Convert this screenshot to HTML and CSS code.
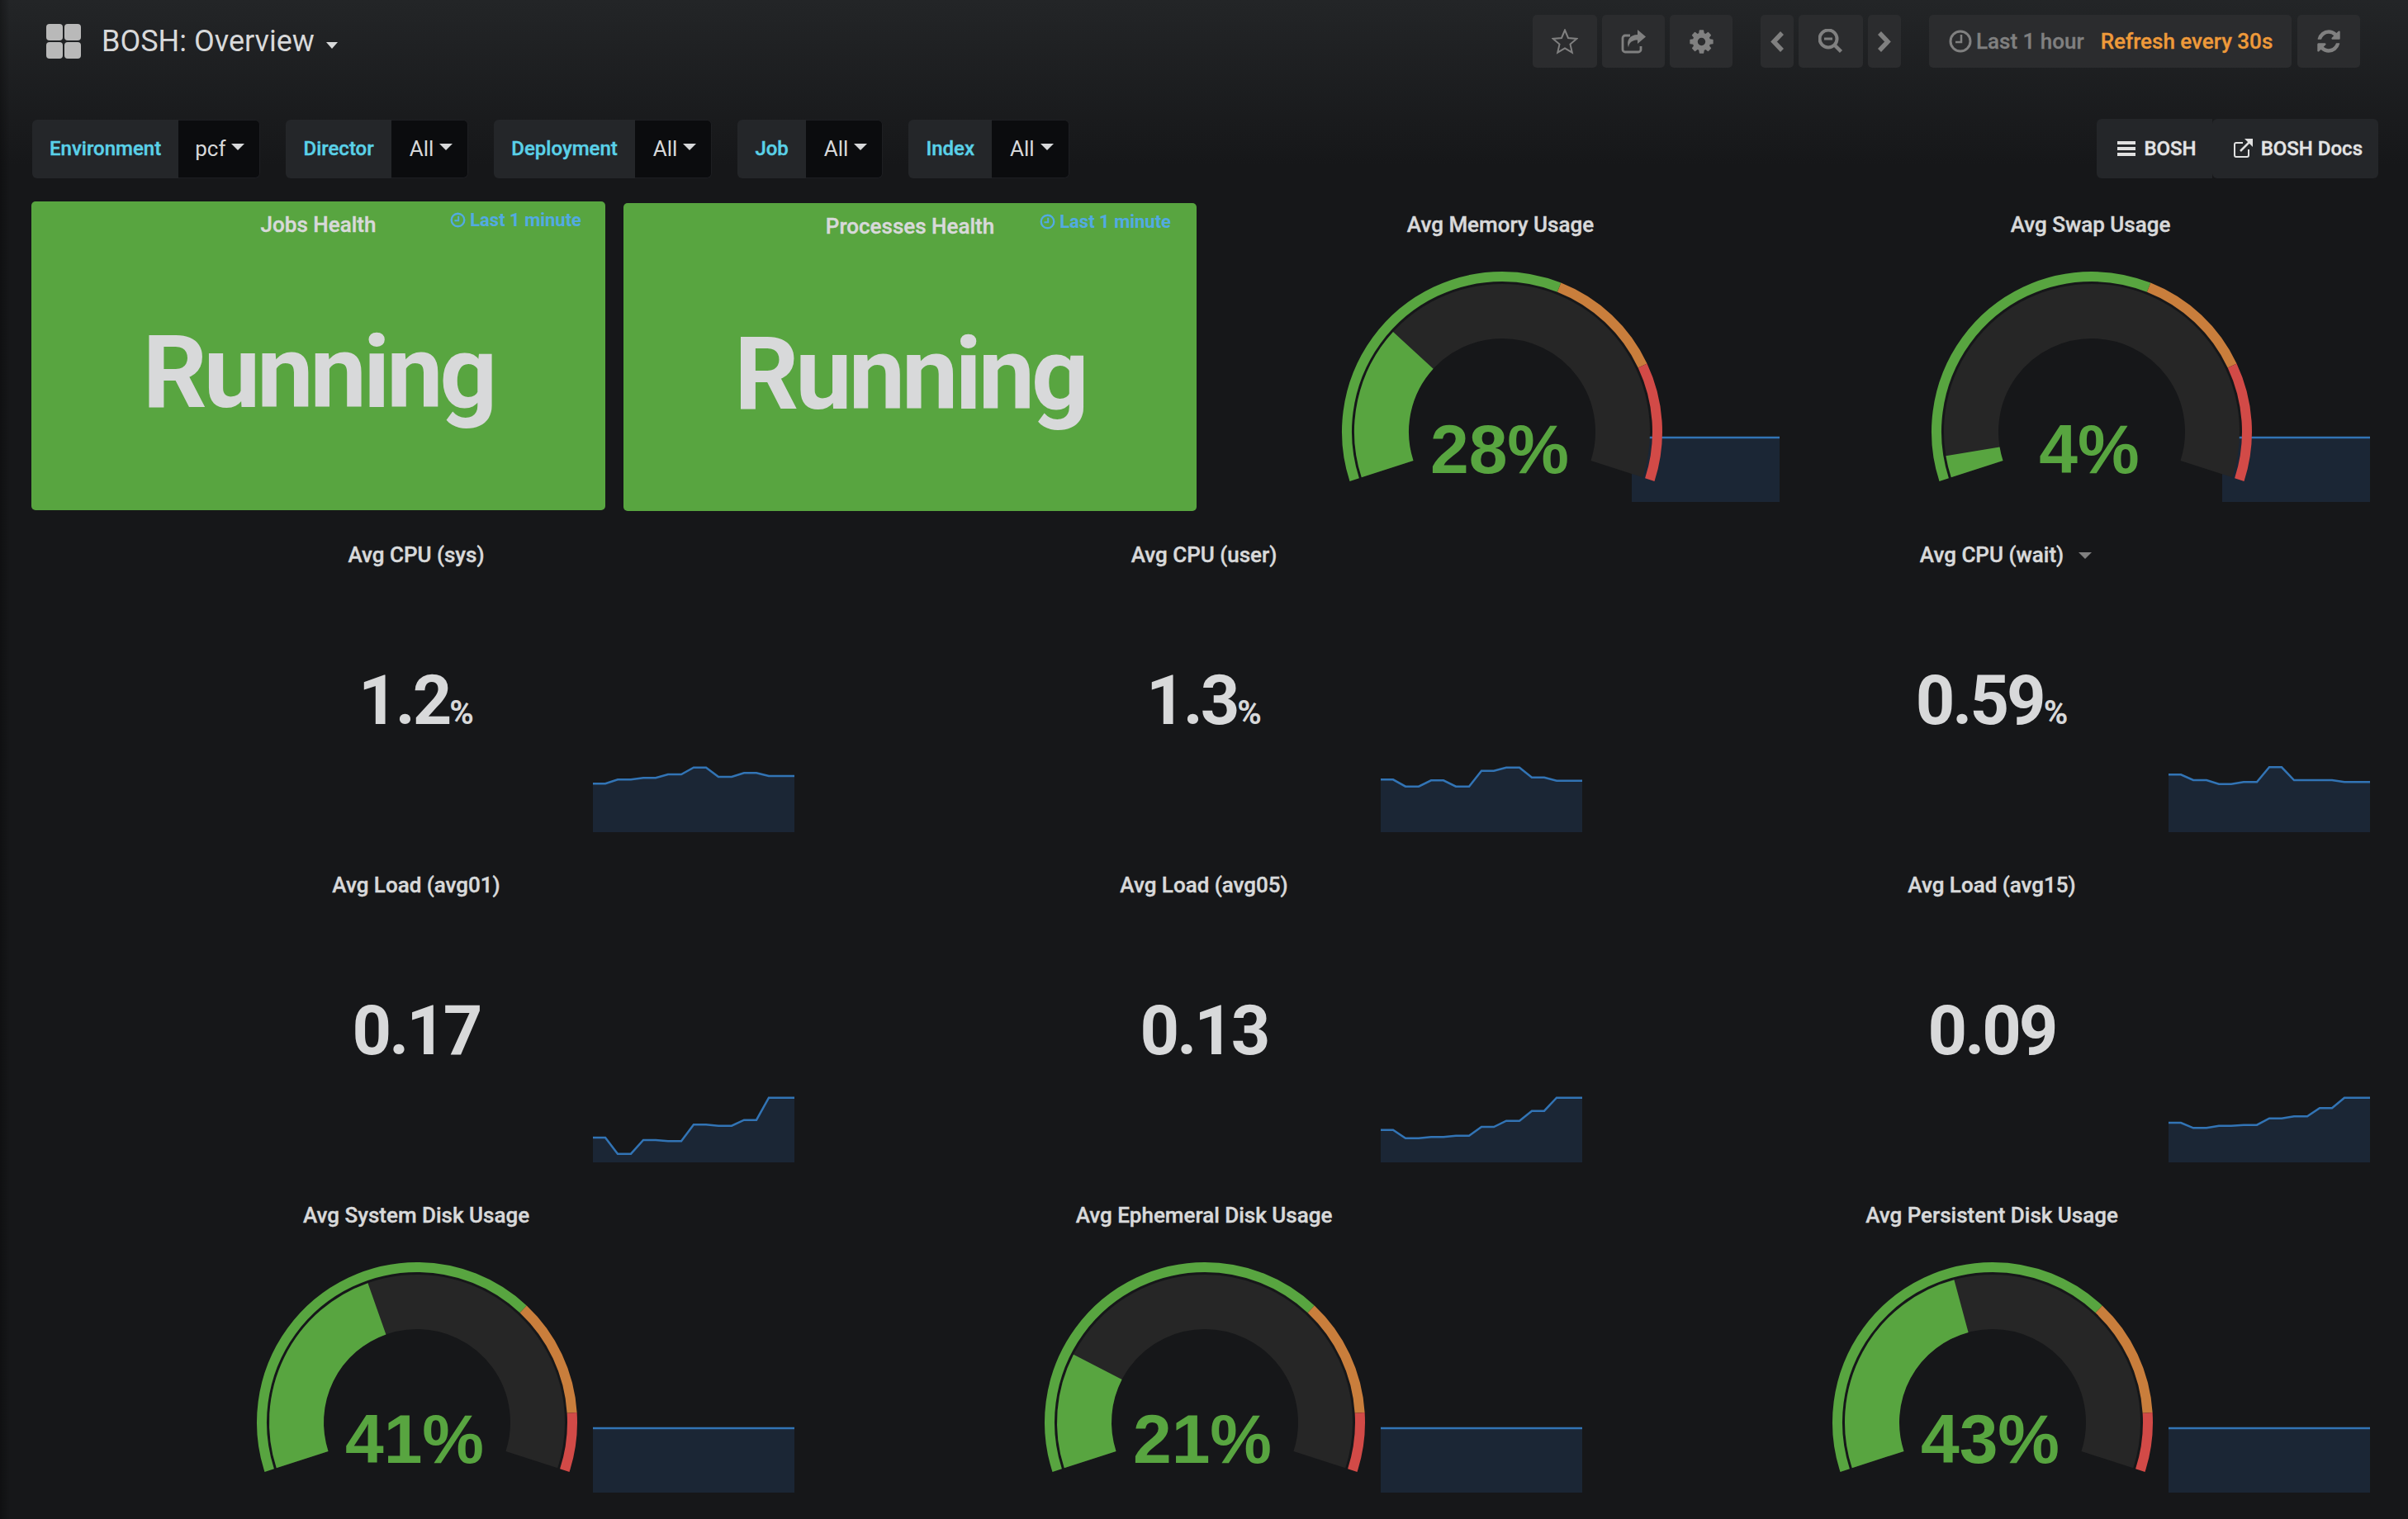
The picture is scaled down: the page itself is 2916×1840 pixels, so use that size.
FILE: index.html
```html
<!DOCTYPE html>
<html lang="en">
<head>
    <meta charset="UTF-8">
    <title>BOSH: Overview</title>
    <link rel="stylesheet" href="styles.css">
</head>
<body>
<!-- shared gauge arcs, each one is 100 units long so a dash length is a percent -->
<svg class="defs" width="0" height="0">
    <defs>
        <path id="ring" pathLength="100" d="M-178.8 58.1A188 188 0 1 1 178.8 58.1"/>
        <path id="arc" pathLength="100" d="M-138.85 45.12A146 146 0 1 1 138.85 45.12"/>
        <path id="cog" d="M1152 896q0-106-75-181t-181-75-181 75-75 181 75 181 181 75 181-75 75-181zm512-109v222q0 12-8 23t-20 13l-185 28q-19 54-39 91 35 50 107 138 10 12 10 25t-9 23q-27 37-99 108t-94 71q-12 0-26-9l-138-108q-44 23-91 38-16 136-29 186-7 28-36 28h-222q-14 0-24.5-8.5t-11.5-21.5l-28-184q-49-16-90-37l-141 107q-10 9-25 9-14 0-25-11-126-114-165-168-7-10-7-23 0-12 8-23 15-21 51-66.5t54-70.5q-27-50-41-99l-183-27q-13-2-21-12.5t-8-23.5v-222q0-12 8-23t19-13l186-28q14-46 39-92-40-57-107-138-10-12-10-24 0-10 9-23 26-36 98.5-107.5t94.5-71.5q13 0 26 10l138 107q44-23 91-38 16-136 29-186 7-28 36-28h222q14 0 24.5 8.5t11.5 21.5l28 184q49 16 90 37l142-107q9-9 24-9 13 0 25 10 129 119 165 170 7 8 7 22 0 12-8 23-15 21-51 66.5t-54 70.5q26 50 41 98l183 28q13 2 21 12.5t8 23.5z"/>
    </defs>
</svg>

<div class="navbar">
    <div class="nav-left">
        <div class="grid-icon"><i></i><i></i><i></i><i></i></div>
        <span class="dash-title">BOSH: Overview</span>
        <span class="caret title-caret"></span>
    </div>
    <div class="nav-right">
        <div class="btn-group">
            <div class="btn w78">
                <svg width="32" height="31" viewBox="0 0 32 31"><polygon class="line" stroke-width="2" points="16,1.5 20,11 30.3,11.9 22.5,18.6 24.8,28.6 16,23.3 7.2,28.6 9.5,18.6 1.7,11.9 12,11"/></svg>
            </div>
            <div class="btn w76">
                <svg width="30" height="29" viewBox="0 0 30 29"><path class="line" stroke-width="2.8" d="M24 20v4a3 3 0 0 1-3 3H5a3 3 0 0 1-3-3V10a3 3 0 0 1 3-3h6"/><path class="solid" d="M20 0l10 8.5L20 17v-4.500c-6 0-10 2.500-11 9-3-9 2-15.500 11-15.500z"/></svg>
            </div>
            <div class="btn w76">
                <svg width="33" height="33" viewBox="0 0 1792 1792"><use class="solid" href="#cog"/></svg>
            </div>
        </div>
        <div class="btn-group">
            <div class="btn w40">
                <svg width="18" height="25" viewBox="0 0 18 25"><polyline class="line" stroke-width="5.500" points="15,2 5,12.500 15,23"/></svg>
            </div>
            <div class="btn w78">
                <svg width="30" height="30" viewBox="0 0 30 30"><circle class="line" stroke-width="4" cx="12" cy="12" r="10.500"/><path class="line" stroke-width="3" d="M7 12h10"/><path class="line" stroke-width="4.500" d="M19.500 19.500l8 8"/></svg>
            </div>
            <div class="btn w40">
                <svg width="18" height="25" viewBox="0 0 18 25"><polyline class="line" stroke-width="5.500" points="3,2 13,12.500 3,23"/></svg>
            </div>
        </div>
        <div class="btn-group gap7">
            <div class="btn time-btn">
                <svg class="clock" width="28" height="28" viewBox="0 0 28 28"><circle class="line" stroke-width="3" cx="14" cy="14" r="12"/><path class="line" stroke-width="2.500" d="M15 6v9H8"/></svg>
                <span>Last 1 hour</span>
                <span class="refresh-text">Refresh every 30s</span>
            </div>
            <div class="btn w76">
                <svg width="32" height="32" viewBox="0 0 1792 1792"><path class="solid" d="M1639 1056q0 5-1 7-64 268-268 434.500t-478 166.500q-146 0-282.500-55t-243.500-157l-129 129q-19 19-45 19t-45-19-19-45v-448q0-26 19-45t45-19h448q26 0 45 19t19 45-19 45l-137 137q71 66 161 102t187 36q134 0 250-65t186-179q11-17 53-117 8-23 30-23h192q13 0 22.500 9.500t9.500 22.500zm25-800v448q0 26-19 45t-45 19h-448q-26 0-45-19t-19-45 19-45l138-138q-148-137-349-137-134 0-250 65t-186 179q-11 17-53 117-8 23-30 23h-199q-13 0-22.500-9.500t-9.500-22.500v-7q65-268 270-434.500t480-166.500q146 0 284 55.500t245 156.500l130-129q19-19 45-19t45 19 19 45z"/></svg>
            </div>
        </div>
    </div>
</div>

<div class="submenu">
    <div class="vars">
        <div class="var"><label>Environment</label><div class="var-value">pcf<span class="caret"></span></div></div>
        <div class="var"><label>Director</label><div class="var-value">All<span class="caret"></span></div></div>
        <div class="var"><label>Deployment</label><div class="var-value">All<span class="caret"></span></div></div>
        <div class="var"><label>Job</label><div class="var-value">All<span class="caret"></span></div></div>
        <div class="var"><label>Index</label><div class="var-value">All<span class="caret"></span></div></div>
    </div>
    <div class="links">
        <a class="link link-first">
            <span class="bars"><i></i><i></i><i></i></span>BOSH
        </a>
        <a class="link">
            <svg class="ext" width="24" height="24" viewBox="0 0 24 24"><path fill="none" stroke="#e0e0e0" stroke-width="2" d="M19 13v7a2 2 0 0 1-2 2H4a2 2 0 0 1-2-2V7a2 2 0 0 1 2-2h8"/><path fill="none" stroke="#e0e0e0" stroke-width="2.500" d="M9 15L21 3"/><path fill="#e0e0e0" d="M14 0h10v10z"/></svg>BOSH Docs
        </a>
    </div>
</div>

<div class="dash">
    <div class="row row-top">
        <div class="panel panel-ok">
            <div class="panel-title"><span>Jobs Health</span></div>
            <div class="time-info">
                <svg width="19" height="19" viewBox="0 0 28 28"><circle fill="none" stroke="#52aae2" stroke-width="3.500" cx="14" cy="14" r="11.500"/><path fill="none" stroke="#52aae2" stroke-width="3" d="M15 7v8H8"/></svg>Last 1 minute
            </div>
            <div class="status">Running</div>
        </div>
        <div class="panel panel-ok panel-nudge">
            <div class="panel-title"><span>Processes Health</span></div>
            <div class="time-info">
                <svg width="19" height="19" viewBox="0 0 28 28"><circle fill="none" stroke="#52aae2" stroke-width="3.500" cx="14" cy="14" r="11.500"/><path fill="none" stroke="#52aae2" stroke-width="3" d="M15 7v8H8"/></svg>Last 1 minute
            </div>
            <div class="status">Running</div>
        </div>
        <div class="panel">
            <div class="panel-title"><span>Avg Memory Usage</span></div>
            <svg class="gauge" width="400" height="300" viewBox="-202 -225 400 300">
                <use class="g-track" href="#arc"/>
                <use class="g-value" href="#arc" stroke-dasharray="28 100"/>
                <use class="g-ok" href="#ring" stroke-dasharray="60 100"/>
                <use class="g-warn" href="#ring" stroke-dasharray="20 100" stroke-dashoffset="-60"/>
                <use class="g-crit" href="#ring" stroke-dasharray="20 100" stroke-dashoffset="-80"/>
                <text class="g-text" x="-3" y="50">28%</text>
            </svg>
            <svg class="spark spark-flat" viewBox="0 0 179 80" preserveAspectRatio="none">
                <polygon class="spark-fill" points="0,2 179,2 179,80 0,80"/>
                <polyline class="spark-line" points="0,2 179,2"/>
            </svg>
        </div>
        <div class="panel">
            <div class="panel-title"><span>Avg Swap Usage</span></div>
            <svg class="gauge" width="400" height="300" viewBox="-201 -225 400 300">
                <use class="g-track" href="#arc"/>
                <use class="g-value" href="#arc" stroke-dasharray="4 100"/>
                <use class="g-ok" href="#ring" stroke-dasharray="60 100"/>
                <use class="g-warn" href="#ring" stroke-dasharray="20 100" stroke-dashoffset="-60"/>
                <use class="g-crit" href="#ring" stroke-dasharray="20 100" stroke-dashoffset="-80"/>
                <text class="g-text" x="-3" y="50">4%</text>
            </svg>
            <svg class="spark spark-flat" viewBox="0 0 179 80" preserveAspectRatio="none">
                <polygon class="spark-fill" points="0,2 179,2 179,80 0,80"/>
                <polyline class="spark-line" points="0,2 179,2"/>
            </svg>
        </div>
    </div>

    <div class="row">
        <div class="panel">
            <div class="panel-title"><span>Avg CPU (sys)</span></div>
            <div class="stat">1.2<small>%</small></div>
            <svg class="spark" viewBox="0 0 244 80" preserveAspectRatio="none">
                <polygon class="spark-fill" points="0,21.3 15,21.3 30,16.3 46,16.3 61,14.3 76,14.3 91,10 107,10 122,1.700 137,1.700 152,13 168,13 183,8.300 198,8.300 213,12 229,12 244,12 244,80 0,80"/>
                <polyline class="spark-line" points="0,21.3 15,21.3 30,16.3 46,16.3 61,14.3 76,14.3 91,10 107,10 122,1.700 137,1.700 152,13 168,13 183,8.300 198,8.300 213,12 229,12 244,12"/>
            </svg>
        </div>
        <div class="panel">
            <div class="panel-title"><span>Avg CPU (user)</span></div>
            <div class="stat">1.3<small>%</small></div>
            <svg class="spark" viewBox="0 0 244 80" preserveAspectRatio="none">
                <polygon class="spark-fill" points="0,16.3 15,16.3 30,24.7 46,24.7 61,17.3 76,17.3 91,24.7 107,24.7 122,5.700 137,5.700 152,1.700 168,1.700 183,13.7 198,13.7 213,17.7 229,17.7 244,17.7 244,80 0,80"/>
                <polyline class="spark-line" points="0,16.3 15,16.3 30,24.7 46,24.7 61,17.3 76,17.3 91,24.7 107,24.7 122,5.700 137,5.700 152,1.700 168,1.700 183,13.7 198,13.7 213,17.7 229,17.7 244,17.7"/>
            </svg>
        </div>
        <div class="panel">
            <div class="panel-title"><span class="has-menu">Avg CPU (wait)</span></div>
            <div class="stat">0.59<small>%</small></div>
            <svg class="spark" viewBox="0 0 244 80" preserveAspectRatio="none">
                <polygon class="spark-fill" points="0,10.3 15,10.3 30,17 46,17 61,21.7 76,21.7 91,19.3 107,19.3 122,1.300 137,1.300 152,17 168,17 183,17 198,17 213,19.3 229,19.3 244,19.3 244,80 0,80"/>
                <polyline class="spark-line" points="0,10.3 15,10.3 30,17 46,17 61,21.7 76,21.7 91,19.3 107,19.3 122,1.300 137,1.300 152,17 168,17 183,17 198,17 213,19.3 229,19.3 244,19.3"/>
            </svg>
        </div>
    </div>

    <div class="row">
        <div class="panel">
            <div class="panel-title"><span>Avg Load (avg01)</span></div>
            <div class="stat">0.17</div>
            <svg class="spark" viewBox="0 0 244 80" preserveAspectRatio="none">
                <polygon class="spark-fill" points="0,50 15,50 30,69.7 46,69.7 61,53 76,53 91,54.3 107,54.3 122,34.3 137,34.3 152,35.7 168,35.7 183,28.7 198,28.7 213,1.700 229,1.700 244,1.700 244,80 0,80"/>
                <polyline class="spark-line" points="0,50 15,50 30,69.7 46,69.7 61,53 76,53 91,54.3 107,54.3 122,34.3 137,34.3 152,35.7 168,35.7 183,28.7 198,28.7 213,1.700 229,1.700 244,1.700"/>
            </svg>
        </div>
        <div class="panel">
            <div class="panel-title"><span>Avg Load (avg05)</span></div>
            <div class="stat">0.13</div>
            <svg class="spark" viewBox="0 0 244 80" preserveAspectRatio="none">
                <polygon class="spark-fill" points="0,40.7 15,40.7 30,50.7 46,50.7 61,49.3 76,49.3 91,47.7 107,47.7 122,37 137,37 152,29.7 168,29.7 183,17.7 198,17.7 213,1.700 229,1.700 244,1.700 244,80 0,80"/>
                <polyline class="spark-line" points="0,40.7 15,40.7 30,50.7 46,50.7 61,49.3 76,49.3 91,47.7 107,47.7 122,37 137,37 152,29.7 168,29.7 183,17.7 198,17.7 213,1.700 229,1.700 244,1.700"/>
            </svg>
        </div>
        <div class="panel">
            <div class="panel-title"><span>Avg Load (avg15)</span></div>
            <div class="stat">0.09</div>
            <svg class="spark" viewBox="0 0 244 80" preserveAspectRatio="none">
                <polygon class="spark-fill" points="0,32 15,32 30,38.3 46,38.3 61,35.7 76,35.7 91,34.7 107,34.7 122,26.7 137,26.7 152,24.3 168,24.3 183,14.3 198,14.3 213,1.700 229,1.700 244,1.700 244,80 0,80"/>
                <polyline class="spark-line" points="0,32 15,32 30,38.3 46,38.3 61,35.7 76,35.7 91,34.7 107,34.7 122,26.7 137,26.7 152,24.3 168,24.3 183,14.3 198,14.3 213,1.700 229,1.700 244,1.700"/>
            </svg>
        </div>
    </div>

    <div class="row">
        <div class="panel">
            <div class="panel-title"><span>Avg System Disk Usage</span></div>
            <svg class="gauge" width="400" height="300" viewBox="-201 -225 400 300">
                <use class="g-track" href="#arc"/>
                <use class="g-value" href="#arc" stroke-dasharray="41 100"/>
                <use class="g-ok" href="#ring" stroke-dasharray="70 100"/>
                <use class="g-warn" href="#ring" stroke-dasharray="20 100" stroke-dashoffset="-70"/>
                <use class="g-crit" href="#ring" stroke-dasharray="10 100" stroke-dashoffset="-90"/>
                <text class="g-text" x="-3" y="49">41%</text>
            </svg>
            <svg class="spark" viewBox="0 0 244 80" preserveAspectRatio="none">
                <polygon class="spark-fill" points="0,2 244,2 244,80 0,80"/>
                <polyline class="spark-line" points="0,2 244,2"/>
            </svg>
        </div>
        <div class="panel">
            <div class="panel-title"><span>Avg Ephemeral Disk Usage</span></div>
            <svg class="gauge" width="400" height="300" viewBox="-201 -225 400 300">
                <use class="g-track" href="#arc"/>
                <use class="g-value" href="#arc" stroke-dasharray="21 100"/>
                <use class="g-ok" href="#ring" stroke-dasharray="70 100"/>
                <use class="g-warn" href="#ring" stroke-dasharray="20 100" stroke-dashoffset="-70"/>
                <use class="g-crit" href="#ring" stroke-dasharray="10 100" stroke-dashoffset="-90"/>
                <text class="g-text" x="-3" y="49">21%</text>
            </svg>
            <svg class="spark" viewBox="0 0 244 80" preserveAspectRatio="none">
                <polygon class="spark-fill" points="0,2 244,2 244,80 0,80"/>
                <polyline class="spark-line" points="0,2 244,2"/>
            </svg>
        </div>
        <div class="panel">
            <div class="panel-title"><span>Avg Persistent Disk Usage</span></div>
            <svg class="gauge" width="400" height="300" viewBox="-201 -225 400 300">
                <use class="g-track" href="#arc"/>
                <use class="g-value" href="#arc" stroke-dasharray="43 100"/>
                <use class="g-ok" href="#ring" stroke-dasharray="70 100"/>
                <use class="g-warn" href="#ring" stroke-dasharray="20 100" stroke-dashoffset="-70"/>
                <use class="g-crit" href="#ring" stroke-dasharray="10 100" stroke-dashoffset="-90"/>
                <text class="g-text" x="-3" y="49">43%</text>
            </svg>
            <svg class="spark" viewBox="0 0 244 80" preserveAspectRatio="none">
                <polygon class="spark-fill" points="0,2 244,2 244,80 0,80"/>
                <polyline class="spark-line" points="0,2 244,2"/>
            </svg>
        </div>
    </div>
</div>
</body>
</html>
```

FILE: styles.css
```css
* {
    box-sizing: border-box;
}

html, body {
    margin: 0;
    padding: 0;
}

body {
    width: 2916px;
    height: 1840px;
    padding-top: 18px;
    overflow: hidden;
    font-family: Roboto, "Liberation Sans", sans-serif;
    color: #d8d9da;
    background:
        linear-gradient(90deg, rgba(0, 0, 0, .3), rgba(0, 0, 0, 0) 12px),
        linear-gradient(#232527 0, #161719 200px);
}

.defs {
    position: absolute;
}

/* top bar */
.navbar {
    display: flex;
    justify-content: space-between;
    align-items: center;
    height: 64px;
    padding: 0 58px 0 56px;
}

.nav-left {
    display: flex;
    align-items: center;
}

.grid-icon {
    display: grid;
    grid-template-columns: 20px 20px;
    grid-template-rows: 20px 20px;
    gap: 2px;
    margin-right: 25px;
}

.grid-icon i {
    background: #b9b9b9;
    border-radius: 4px;
}

.dash-title {
    font-size: 36px;
    color: #d8d9da;
}

.caret {
    display: inline-block;
    width: 0;
    height: 0;
    border-top: 8px solid #d8d9da;
    border-left: 7px solid transparent;
    border-right: 7px solid transparent;
}

.title-caret {
    margin: 10px 0 0 14px;
}

.nav-right {
    display: flex;
    gap: 34px;
}

.btn-group {
    display: flex;
    gap: 6px;
}

.btn-group.gap7 {
    gap: 7px;
}

.btn {
    display: flex;
    align-items: center;
    justify-content: center;
    height: 64px;
    background: #2b2c2e;
    border-radius: 5px;
    font-size: 26px;
    font-weight: 500;
    color: #808080;
    -webkit-text-stroke: .3px;
}

.w78 { width: 78px; }
.w76 { width: 76px; }
.w40 { width: 40px; }

.time-btn {
    width: 439px;
    justify-content: flex-start;
    padding-left: 24px;
}

.clock {
    margin-right: 5px;
}

.refresh-text {
    margin-left: 20px;
    color: #ee9a3a;
}

.line {
    fill: none;
    stroke: #808080;
}

.solid {
    fill: #808080;
}

/* template variables and dashboard links */
.submenu {
    display: flex;
    justify-content: space-between;
    align-items: center;
    height: 72px;
    margin-top: 62px;
    padding: 0 36px 0 39px;
}

.vars {
    display: flex;
    gap: 31px;
}

.var {
    display: flex;
    height: 71px;
}

.var label {
    display: flex;
    align-items: center;
    padding: 0 21px;
    background: #242629;
    border-radius: 6px 0 0 6px;
    font-size: 24px;
    font-weight: 500;
    color: #5ad1e8;
    -webkit-text-stroke: .4px;
}

.var-value {
    display: flex;
    align-items: center;
    padding: 0 18px 0 22px;
    background: #0b0c0e;
    border: 1px solid #1e1f22;
    border-left: 0;
    border-radius: 0 6px 6px 0;
    font-size: 26px;
    color: #d8d9da;
}

.var:first-child .var-value {
    padding-left: 20px;
}

.var-value .caret {
    margin: 0 0 5px 7px;
    border-left-width: 8px;
    border-right-width: 8px;
}

.links {
    display: flex;
}

.link {
    display: flex;
    align-items: center;
    height: 72px;
    padding: 0 19px 0 25px;
    background: #242629;
    border-radius: 6px;
    font-size: 24px;
    font-weight: 500;
    color: #e3e3e4;
    -webkit-text-stroke: .4px;
}

.link-first {
    border-radius: 6px 0 0 6px;
}

.bars {
    display: flex;
    flex-direction: column;
    gap: 3px;
    width: 22px;
    margin-right: 10px;
}

.bars i {
    display: block;
    height: 4px;
    background: #e0e0e0;
}

.ext {
    margin-right: 10px;
}

/* dashboard */
.dash {
    display: flex;
    flex-direction: column;
    gap: 26px;
    margin-top: 28px;
    padding: 0 38px;
}

.row {
    display: grid;
    grid-template-columns: repeat(3, 1fr);
    gap: 22px;
    height: 374px;
}

.row-top {
    grid-template-columns: 695px 694px 692px 693px;
}

.panel {
    position: relative;
    border-radius: 5px;
}

.panel-ok {
    background: #58a540;
}

.panel-nudge {
    margin-top: 2px;
    margin-bottom: -1px;
}

.panel-nudge .time-info {
    right: 31px;
}

.panel-title {
    height: 54px;
    padding-top: 1px;
    line-height: 54px;
    text-align: center;
    font-size: 26px;
    font-weight: 500;
    color: #d8d9da;
    -webkit-text-stroke: .4px;
}

.panel-title span {
    position: relative;
    display: inline-block;
}

.has-menu::after {
    content: "";
    position: absolute;
    top: 24px;
    left: calc(100% + 18px);
    border-top: 8px solid #808080;
    border-left: 8px solid transparent;
    border-right: 8px solid transparent;
}

.time-info {
    position: absolute;
    top: 10px;
    right: 29px;
    display: flex;
    align-items: center;
    gap: 5px;
    font-size: 22px;
    font-weight: 700;
    color: #52aae2;
}

.status {
    margin-top: 93px;
    line-height: 122px;
    text-align: center;
    font-size: 122px;
    font-weight: 700;
    letter-spacing: -4px;
    color: #d8d9da;
}

.stat {
    margin-top: 109px;
    line-height: 83px;
    text-align: center;
    font-size: 83px;
    font-weight: 700;
    letter-spacing: -3px;
    color: #d8d9da;
}

.stat small {
    font-size: 40px;
    letter-spacing: 0;
}

/* gauges */
.gauge {
    position: relative;
    z-index: 1;
    display: block;
    margin: 0 auto;
}

.gauge use {
    fill: none;
}

.g-track {
    stroke: #262626;
    stroke-width: 66;
}

.g-value {
    stroke: #58a540;
    stroke-width: 66;
}

.g-ok {
    stroke: #58a540;
    stroke-width: 12;
}

.g-warn {
    stroke: #c97e3c;
    stroke-width: 12;
}

.g-crit {
    stroke: #d24a47;
    stroke-width: 12;
}

.g-text {
    fill: #58a540;
    text-anchor: middle;
    font-family: "Liberation Sans", Arial, sans-serif;
    font-size: 84px;
    font-weight: 700;
}

/* sparklines sit in the bottom corner of a panel */
.spark {
    position: absolute;
    right: 8px;
    bottom: 10px;
    width: 244px;
    height: 80px;
}

.spark-flat {
    width: 179px;
}

.spark-fill {
    fill: #1b2635;
}

.spark-line {
    fill: none;
    stroke: #3274b5;
    stroke-width: 2.5;
}
```
